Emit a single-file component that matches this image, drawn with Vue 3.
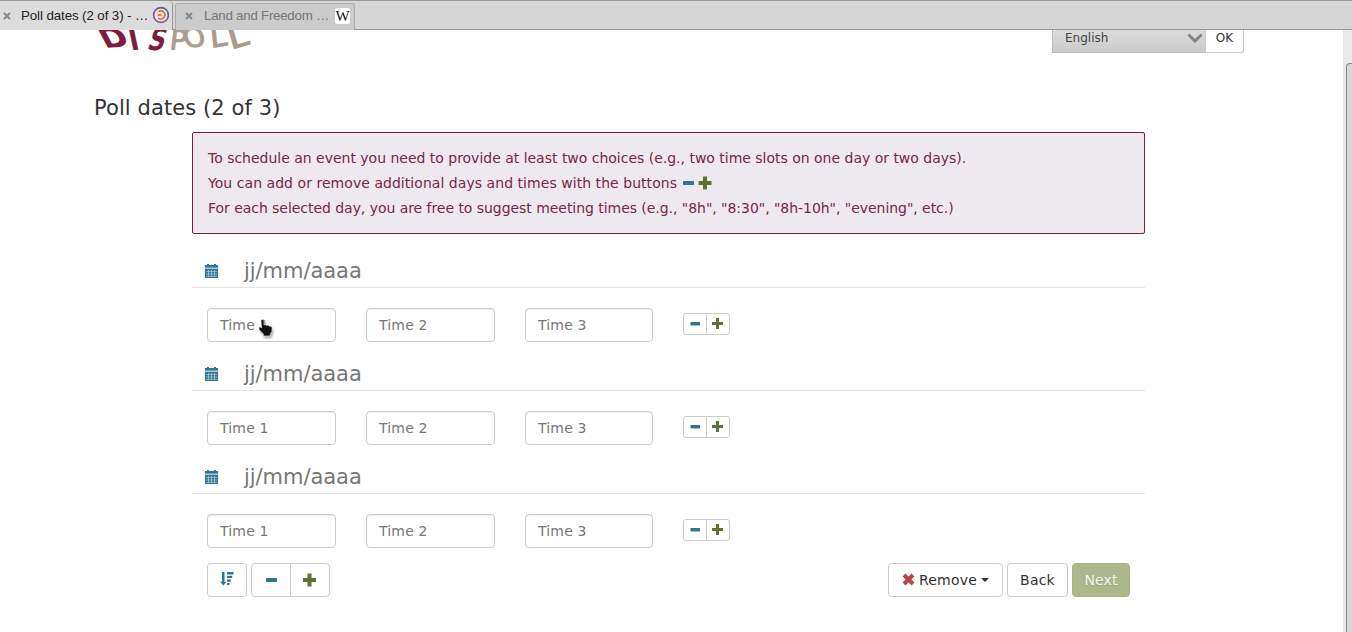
<script setup>
const days = [1, 2, 3]
const times = [1, 2, 3]
</script>

<template>
  <div class="window">
    <div class="tabs">
      <div class="tab active">
        <svg class="close" viewBox="0 0 8 8"><path d="M1 1 7 7M7 1 1 7" /></svg>
        <span class="label">Poll dates (2 of 3) - …</span>
        <svg class="fav" viewBox="0 0 18 18">
          <circle cx="9" cy="9" r="7.4" fill="#e7e2ec" stroke="#6c5793" stroke-width="1.6" />
          <path d="M6.6 5.6A4 4 0 1 1 6.2 12M5.6 9H9.4" fill="none" stroke="#e8793c" stroke-width="1.9" />
        </svg>
      </div>
      <div class="tab idle">
        <svg class="close" viewBox="0 0 8 8"><path d="M1 1 7 7M7 1 1 7" /></svg>
        <span class="label">Land and Freedom …</span>
        <span class="wiki">W</span>
      </div>
    </div>

    <div class="page">
      <header class="top">
        <svg class="logo" viewBox="0 0 160 24" width="160" height="24">
          <g class="dis">
            <text transform="translate(13 18) rotate(-4) skewX(24) scale(1.05 .82)">D</text>
            <text transform="translate(39 20) rotate(-2) skewX(10) scale(.85 1)">I</text>
            <text transform="translate(54 20) rotate(0) skewX(-18) scale(.78 .9)">S</text>
          </g>
          <g class="poll">
            <text transform="translate(77 19.5) rotate(4) skewX(-2) scale(1 .92)">P</text>
            <text transform="translate(93 17.5) rotate(-4) skewX(8) scale(1 .86)">O</text>
            <text transform="translate(119 18) rotate(-10) skewX(-4) scale(1.1 1)">L</text>
            <text transform="translate(139 19.5) rotate(-16) skewX(0) scale(1.3 1)">L</text>
          </g>
        </svg>
        <form class="lang" @submit.prevent>
          <div class="select">
            <span>English</span>
            <svg width="16" height="10" viewBox="0 0 16 10"><path d="M1.5 1.5 8 8 14.5 1.5" fill="none" stroke="#858585" stroke-width="3" /></svg>
          </div>
          <button class="ok">OK</button>
        </form>
      </header>

      <h1>Poll dates (2 of 3)</h1>

      <main>
        <div class="info">
          <p class="first">To schedule an event you need to provide at least two choices (e.g., two time slots on one day or two days).</p>
          <p class="with-icons">You can add or remove additional days and times with the buttons
            <svg class="glyph minus" viewBox="0 0 14 14"><rect x="1" y="5" width="11" height="4" rx=".6" /></svg><svg class="glyph plus" viewBox="0 0 14 14"><path d="M5 .5h4V5h4.5v4H9v4.5H5V9H.5V5H5z" /></svg>
          </p>
          <p class="last">For each selected day, you are free to suggest meeting times (e.g., "8h", "8:30", "8h-10h", "evening", etc.)</p>
        </div>

        <section v-for="d in days" :key="d" class="day">
          <div class="date">
            <svg class="cal" width="13" height="14" viewBox="0 0 13 14">
              <path d="M0 1h13v13H0z" fill="#327493" />
              <path d="M2 0h2v2H2zM9 0h2v2H9z" fill="#327493" />
              <path d="M0 3.5h13v1.5H0z" fill="#a9cbd9" />
              <path d="M1 7.5h11M1 10h11M1 12.4h11M3.5 6v7M6.5 6v7M9.5 6v7" stroke="#c5dce5" stroke-width=".6" />
            </svg>
            <span class="placeholder">jj/mm/aaaa</span>
          </div>
          <div class="slots">
            <div v-for="t in times" :key="t" class="field">Time {{ t }}</div>
            <div class="group small">
              <button><svg class="glyph minus" viewBox="0 0 14 14"><rect x="2.5" y="5" width="9.5" height="3.5" /></svg></button>
              <button><svg class="glyph plus" viewBox="0 0 14 14"><path d="M5 1h3v4h4v3H8v4H5V8H1V5h4z" /></svg></button>
            </div>
            <svg v-if="d === 1" class="cursor" width="16" height="20" viewBox="0 0 16 20">
              <path d="M3 1.5C3 .3 6 .3 6 1.5V6l1.3-.6 1.2 1 1.6-.5 1.3 1.2 1.8.2.8 1.3v3.6l-1.700 3V17H5.300v-2L1 10.500V8h1.500L3.500 9z" fill="#111" stroke="#fff" stroke-width=".6" />
            </svg>
          </div>
        </section>

        <footer class="actions">
          <button class="btn sort">
            <svg width="14" height="14" viewBox="0 0 14 14" fill="#327493">
              <path d="M2 0h2.500v9.800h2L3.300 13.600.1 9.800H2zM7 0h6.500v2.500H7zM7 3.700h5.200V6H7zM7 7.400h3.800v2.300H7zM7 11.100h2.400v2H7z" />
            </svg>
          </button>
          <div class="group big">
            <button><svg class="glyph minus" viewBox="0 0 14 14"><rect x="2" y="5" width="11" height="4" rx=".6" /></svg></button>
            <button><svg class="glyph plus" viewBox="0 0 14 14"><path d="M4.500 .5h4V5H13v4H8.500v4.500h-4V9H0V5h4.500z" /></svg></button>
          </div>
          <div class="spacer"></div>
          <button class="btn remove">
            <svg width="13" height="13" viewBox="0 0 13 13"><path d="M2 2 11 11M11 2 2 11" stroke="#ad4a43" stroke-width="4" /></svg>
            <span>Remove</span><i class="caret"></i>
          </button>
          <button class="btn back">Back</button>
          <button class="btn next">Next</button>
        </footer>
      </main>

      <div class="scrollbar"><div class="thumb"></div></div>
    </div>
  </div>
</template>

<style>
body { background: #fff; overflow: hidden; }
</style>

<style scoped>
* { box-sizing: border-box; }
.window { width: 1352px; height: 632px; overflow: hidden; font: 14px/20px "DejaVu Sans", sans-serif; color: #333; display: flex; flex-direction: column; }
button { font: inherit; color: #333; background: #fff; border: 1px solid #ccc; padding: 0; margin: 0; }
.tabs { height: 30px; flex: none; background: #d6d6d6; border-top: 1px solid #999; border-bottom: 1px solid #999; display: flex; font: 13.3px/16px "Liberation Sans", sans-serif; }
.tab { display: flex; align-items: center; }
.active { width: 173px; height: 29px; background: #dcdcdc; border: solid #999; border-width: 0 1px 0 0; border-radius: 0 4px 0 0; padding-left: 3px; color: #222; }
.active .label { width: 132px; margin-left: 10px; flex: none; white-space: nowrap; letter-spacing: -.09px; }
.idle { width: 180px; height: 27px; margin: 2px 0 0 2px; background: #cbcbcb; border: 1px solid #aaa; border-bottom: 0; border-radius: 3px 3px 0 0; padding: 0 0 2px 9px; color: #777; }
.idle .label { width: 131px; margin-left: 11px; flex: none; white-space: nowrap; letter-spacing: -.24px; }
.close { width: 8px; height: 8px; flex: none; fill: none; stroke: #888; stroke-width: 2; }
.fav { width: 18px; height: 18px; flex: none; margin: 0 0 1px -1px; }
.wiki { width: 15px; height: 16px; flex: none; border-radius: 2px; background: #fff; color: #111; font: 15px/16px "Liberation Serif", serif; display: flex; justify-content: center; }
.page { flex: 1; position: relative; background: #fff; }
.top { height: 24px; padding: 0 108px 0 92px; display: flex; justify-content: space-between; align-items: flex-start; }
.logo { display: block; overflow: hidden; font-family: "DejaVu Sans Condensed", "DejaVu Sans", sans-serif; font-size: 34px; }
.dis { fill: #7b1f42; font-weight: 700; }
.poll { fill: #ab9c90; stroke: #ab9c90; stroke-width: 1; font-size: 31px; }
.lang { display: flex; height: 23px; font-size: 12px; line-height: 16px; }
.select { width: 153px; padding: 0 2px 7px 12px; display: flex; justify-content: space-between; align-items: center; background: linear-gradient(#dcdcdc, #cbcbcb); border: solid #bbb; border-width: 0 0 1px 1px; color: #444; }
.ok { width: 39px; border-top: 0; border-radius: 0 0 3px 0; padding-bottom: 7px; }
h1 { margin: 41px 0 0 94px; font-size: 21px; line-height: 26px; height: 26px; font-weight: 400; letter-spacing: .09px; }
main { width: 953px; margin: 11px 0 0 192px; }
.info { height: 102px; border: 1px solid #7b1f42; border-radius: 2px; background: #eee9ef; padding: 13px 15px; color: #7b2448; }
.info p { margin: 0; height: 25px; line-height: 25px; white-space: nowrap; }
.info .first { letter-spacing: -.014px; }
.info .last { letter-spacing: -.046px; }
.glyph { width: 14px; height: 14px; display: block; }
.minus { fill: #327493; }
.plus { fill: #5f7033; }
.with-icons { display: flex; align-items: center; letter-spacing: .046px; }
.with-icons .glyph { margin-bottom: 2px; }
.with-icons .minus { margin-left: 5px; }
.with-icons .plus { margin-left: 2px; }
.day { height: 103px; }
.info + .day { margin-top: 20px; }
.date { height: 34px; border-bottom: 1px solid #e3e3e3; padding-left: 13px; display: flex; align-items: center; }
.placeholder { margin-left: 26px; font-size: 21px; line-height: 30px; color: #777; letter-spacing: -.05px; }
.cal { flex: none; }
.slots { position: relative; padding: 20px 0 0 15px; display: flex; }
.field { width: 129px; height: 34px; margin-right: 30px; padding: 6px 12px; border: 1px solid #ccc; border-radius: 4px; box-shadow: inset 0 1px 1px rgba(0, 0, 0, .075); color: #777; white-space: nowrap; letter-spacing: .18px; }
.field:nth-child(3) { width: 128px; margin-right: 31px; }
.group { display: flex; }
.group button { display: flex; align-items: center; justify-content: center; }
.group button:first-child { border-radius: 3px 0 0 3px; }
.group button:last-child { border-radius: 0 3px 3px 0; margin-left: -1px; }
.small { height: 22px; margin: 5px 0 0 -1px; }
.small button { width: 24px; }
.cursor { position: absolute; left: 66px; top: 31px; filter: drop-shadow(1px 2px 1px rgba(0, 0, 0, .35)); }
.actions { height: 34px; padding: 0 15px; display: flex; }
.btn, .big button { height: 34px; border-radius: 4px; }
.btn { display: flex; align-items: center; justify-content: center; }
.sort { width: 40px; margin-right: 4px; padding-bottom: 2px; }
.big button { width: 40px; }
.big button:first-child { border-radius: 4px 0 0 4px; }
.big button:last-child { border-radius: 0 4px 4px 0; }
.spacer { flex: 1; }
.remove { width: 115px; margin-right: 4px; letter-spacing: .2px; }
.remove svg { margin: 0 4px 2px 0; }
.caret { margin-left: 4px; border: 4px solid transparent; border-top-color: #333; border-bottom: 0; }
.back { width: 61px; margin-right: 4px; letter-spacing: .2px; }
.next { width: 58px; background: #adb88a; border-color: #a5b181; color: #f4f6ee; text-shadow: 0 1px 1px rgba(0, 0, 0, .15); letter-spacing: .1px; }
.scrollbar { position: absolute; right: 0; top: 0; width: 9px; height: 602px; background: #e9e9e9; padding: 33px 0 0 3px; }
.thumb { height: 569px; background: #d8d8d8; border: solid #888; border-width: 1px 0 0 1px; border-radius: 4px 0 0 0; }
</style>
